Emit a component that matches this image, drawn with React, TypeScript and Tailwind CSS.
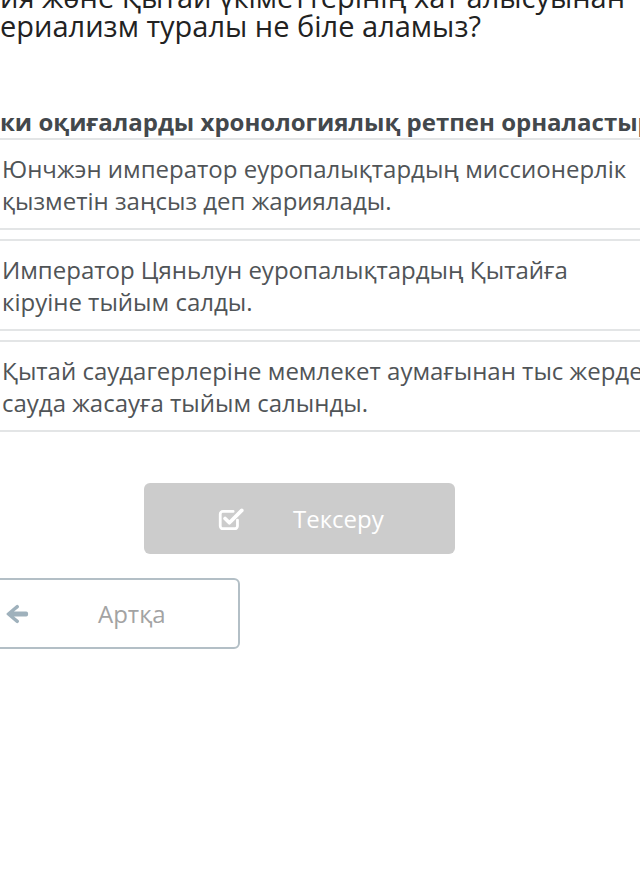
const items = [
  ['Юнчжэн император еуропалықтардың миссионерлік', 'қызметін заңсыз деп жариялады.'],
  ['Император Цяньлун еуропалықтардың Қытайға', 'кіруіне тыйым салды.'],
  ['Қытай саудагерлеріне мемлекет аумағынан тыс жерде', 'сауда жасауға тыйым салынды.'],
];

function CheckSquareIcon() {
  return (
    <svg width="28" height="26" viewBox="0 0 26 24" fill="none">
      <path
        d="M19 13v5.5a2.5 2.5 0 0 1-2.5 2.5h-11A2.5 2.5 0 0 1 3 18.5v-11A2.5 2.5 0 0 1 5.5 5H15"
        stroke="white"
        strokeWidth="2.6"
        strokeLinecap="round"
      />
      <path d="M7.5 11.5l4 4L23 4" stroke="white" strokeWidth="3.4" strokeLinecap="round" strokeLinejoin="round" />
    </svg>
  );
}

function ArrowLeftIcon() {
  return (
    <svg width="24" height="22" viewBox="0 0 24 22" fill="#9fb1bc">
      <path d="M11.2 2.2a1.8 1.8 0 0 1 2.5 2.5L9 8.6h12.2a1.9 1.9 0 0 1 1.9 1.9v1a1.9 1.9 0 0 1-1.9 1.9H9l4.7 3.9a1.8 1.8 0 0 1-2.5 2.5L1.8 11.8a1.1 1.1 0 0 1 0-1.6z" />
    </svg>
  );
}

export default function App() {
  return (
    <div className="w-[640px] h-[884px] overflow-hidden bg-white" style={{ fontFamily: '"Open Sans", sans-serif' }}>
      {/* Question (scrolled, partly off screen) */}
      <div className="-mt-[18px] text-[29px] leading-[29px] text-[#222] whitespace-nowrap">
        <p>ия және Қытай үкіметтерінің хат алысуынан</p>
        <p>ериализм туралы не біле аламыз?</p>
      </div>

      <h3 className="mt-[66px] text-[24px] leading-[32px] font-bold text-[#43484c] whitespace-nowrap">
        ки оқиғаларды хронологиялық ретпен орналастырыңыз
      </h3>

      <div className="flex flex-col gap-[9px]">
        {items.map(([a, b]) => (
          <div key={a} className="border-y-2 border-[#e3e5e6] pt-[13px] pb-[11px] pl-[2px] text-[24px] leading-[32px] text-[#505457] whitespace-nowrap">
            <p>{a}</p>
            <p>{b}</p>
          </div>
        ))}
      </div>

      <button className="mt-[51px] ml-[144px] w-[311px] h-[71px] rounded-[6px] bg-[#cccccc] flex items-center pl-[73px] text-[24px] text-white">
        <CheckSquareIcon />
        <span className="ml-[48px]">Тексеру</span>
      </button>

      <button className="mt-[24px] -ml-[71px] w-[311px] h-[71px] rounded-[6px] border-2 border-[#b3bfc6] bg-white flex items-center pl-[74px] text-[24px] text-[#a3a3a3]">
        <ArrowLeftIcon />
        <span className="ml-[69px]">Артқа</span>
      </button>
    </div>
  );
}
